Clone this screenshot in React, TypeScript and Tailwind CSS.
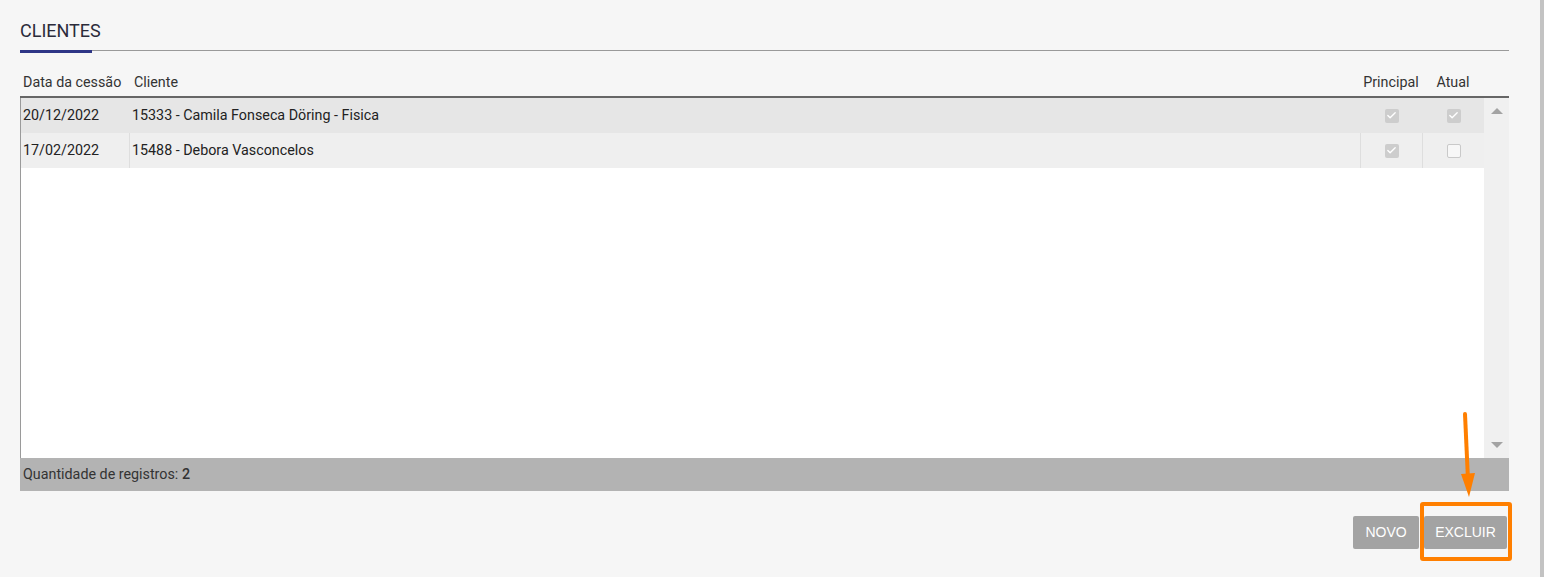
import { Check } from 'lucide-react';

type Row = { date: string; client: string; principal: boolean; atual: boolean; selected?: boolean };

const ROWS: Row[] = [
  { date: '20/12/2022', client: '15333 - Camila Fonseca Döring - Fisica', principal: true, atual: true, selected: true },
  { date: '17/02/2022', client: '15488 - Debora Vasconcelos', principal: true, atual: false },
];

function Box({ checked }: { checked: boolean }) {
  return checked ? (
    <div className="w-[14px] h-[14px] rounded-[2px] bg-[#cdcdcd] flex items-center justify-center">
      <Check className="w-[11px] h-[11px] text-white" strokeWidth={3} />
    </div>
  ) : (
    <div className="w-[14px] h-[14px] rounded-[2px] bg-[#f7f7f7] border border-[#c9c9c9]" />
  );
}

export default function App() {
  return (
    <div className="w-full h-[577px] bg-[#f6f6f6] flex font-['Roboto',sans-serif] text-[14.3px] text-[#333]">
      <div className="flex-1 pl-5 pr-[31px]">
        <div className="w-[1489px] relative">
          {/* Title */}
          <div className="pt-[20px] h-[50px]">
            <h2 className="text-[18px] leading-[22px] text-[#2b2b3a]">CLIENTES</h2>
          </div>
          <div className="flex items-start">
            <div className="w-[72px] h-[3px] bg-[#2e3686]" />
            <div className="flex-1 h-px bg-[#9a9a9a]" />
          </div>

          {/* Header */}
          <div className="flex items-center h-[43px] pt-[17px]">
            <div className="w-[109px] pl-[3px] whitespace-nowrap">Data da cessão</div>
            <div className="flex-1 pl-[5px]">Cliente</div>
            <div className="w-[62px] text-center">Principal</div>
            <div className="w-[62px] text-center">Atual</div>
            <div className="w-[25px]" />
          </div>

          {/* Table body */}
          <div className="border-t-2 border-[#666] h-[362px] flex">
            <div className="flex-1 bg-white border-l border-[#9a9a9a]">
              {ROWS.map((r) => (
                <div
                  key={r.date}
                  className={`flex h-[35px] items-stretch text-[#222] ${r.selected ? 'bg-[#e6e6e6]' : 'bg-[#efefef]'}`}
                >
                  <div className="w-[108px] pl-[2px] flex items-center">{r.date}</div>
                  <div className={`flex-1 pl-[2px] flex items-center border-l ${r.selected ? 'border-transparent' : 'border-[#dedede]'}`}>
                    {r.client}
                  </div>
                  <div className={`w-[62px] flex items-center justify-center border-l ${r.selected ? 'border-transparent' : 'border-[#dedede]'}`}>
                    <Box checked={r.principal} />
                  </div>
                  <div className={`w-[62px] flex items-center justify-center border-l ${r.selected ? 'border-transparent' : 'border-[#dedede]'}`}>
                    <Box checked={r.atual} />
                  </div>
                </div>
              ))}
            </div>
            <div className="w-[25px] bg-[#f0f0f0] flex flex-col items-center justify-between py-[10px]">
              <div className="w-0 h-0 border-l-[6px] border-r-[6px] border-b-[6px] border-l-transparent border-r-transparent border-b-[#a3a3a3]" />
              <div className="w-0 h-0 border-l-[6px] border-r-[6px] border-t-[6px] border-l-transparent border-r-transparent border-t-[#a3a3a3]" />
            </div>
          </div>

          {/* Footer */}
          <div className="h-[33px] bg-[#b3b3b3] flex items-center pl-[3px] text-[#333]">
            Quantidade de registros:&nbsp;<span className="font-medium">2</span>
          </div>

          {/* Buttons */}
          <div className="flex justify-end gap-[5px] pr-[2px] mt-[25px]">
            <button className="h-[33px] w-[66px] rounded-[2px] bg-[#a3a3a3] text-white text-[14px] font-['Liberation_Sans',sans-serif]">
              NOVO
            </button>
            <button className="h-[33px] w-[83px] rounded-[2px] bg-[#a3a3a3] text-white text-[14px] font-['Liberation_Sans',sans-serif]">
              EXCLUIR
            </button>
          </div>

          {/* Annotation */}
          <div className="absolute left-[1400px] top-[502px] w-[92px] h-[59px] border-4 border-[#ff7f00] rounded-[3px]" />
          <svg className="absolute left-[1430px] top-[410px]" width="30" height="90" viewBox="0 0 30 90">
            <line x1="15" y1="4" x2="18" y2="70" stroke="#ff7f00" strokeWidth="4" strokeLinecap="round" />
            <polygon points="11,64 25,63 19,87" fill="#ff7f00" />
          </svg>
        </div>
      </div>
      <div className="w-[4px] bg-[#c3c3c3]" />
    </div>
  );
}
